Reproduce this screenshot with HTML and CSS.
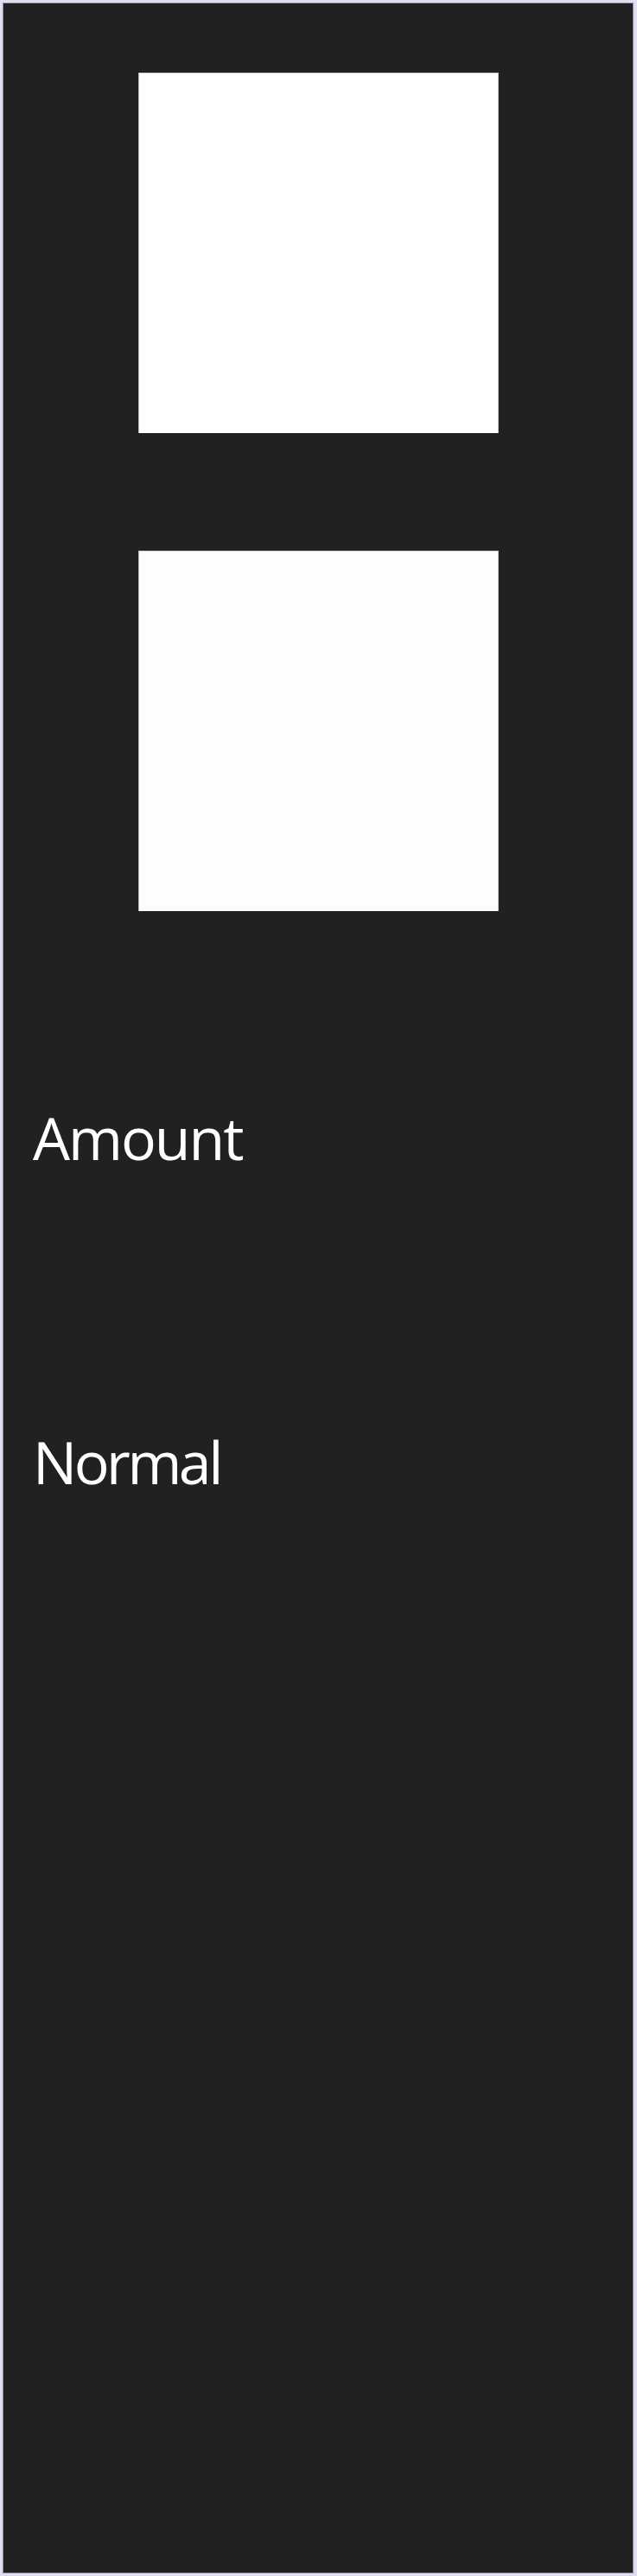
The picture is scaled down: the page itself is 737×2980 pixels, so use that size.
FILE: index.html
```html
<!DOCTYPE html>
<html lang="en">
<head>
<meta charset="utf-8">
<title>Panel</title>
<link rel="stylesheet" href="styles.css">
</head>
<body>
<main class="panel">
  <div class="swatch"></div>
  <div class="swatch swatch-second"></div>
  <p class="label label-amount">Amount</p>
  <p class="label label-normal">Normal</p>
</main>
</body>
</html>
```
FILE: styles.css
```css
html, body {
  margin: 0;
  padding: 0;
}
body {
  background: #dfdff0;
  padding: 3px 4px 3px 3px;
  height: 2980px;
  box-sizing: border-box;
}
.panel {
  box-sizing: border-box;
  height: 2974px;
  background: #202121;
  border: 1px solid #8e8e9c;
  padding-top: 80px;
  display: flex;
  flex-direction: column;
  align-items: flex-start;
}
.swatch {
  align-self: center;
  width: 417px;
  height: 417px;
  box-sizing: border-box;
  background: #ffffff;
  border: 1px solid #b8b8b8;
  border-top-color: #d0d0d0;
  border-bottom: none;
  margin-left: 1px;
}
.swatch-second {
  margin-top: 136px;
  background: #fdfdfd;
}
.label {
  margin: 0;
  color: #ffffff;
  font-family: "Open Sans", "Noto Sans", sans-serif;
  font-size: 68px;
  line-height: 68px;
  letter-spacing: -2px;
  margin-left: 34px;
}
.label-amount {
  margin-top: 228px;
}
.label-normal {
  margin-top: 307px;
  letter-spacing: -3.5px;
}
```
